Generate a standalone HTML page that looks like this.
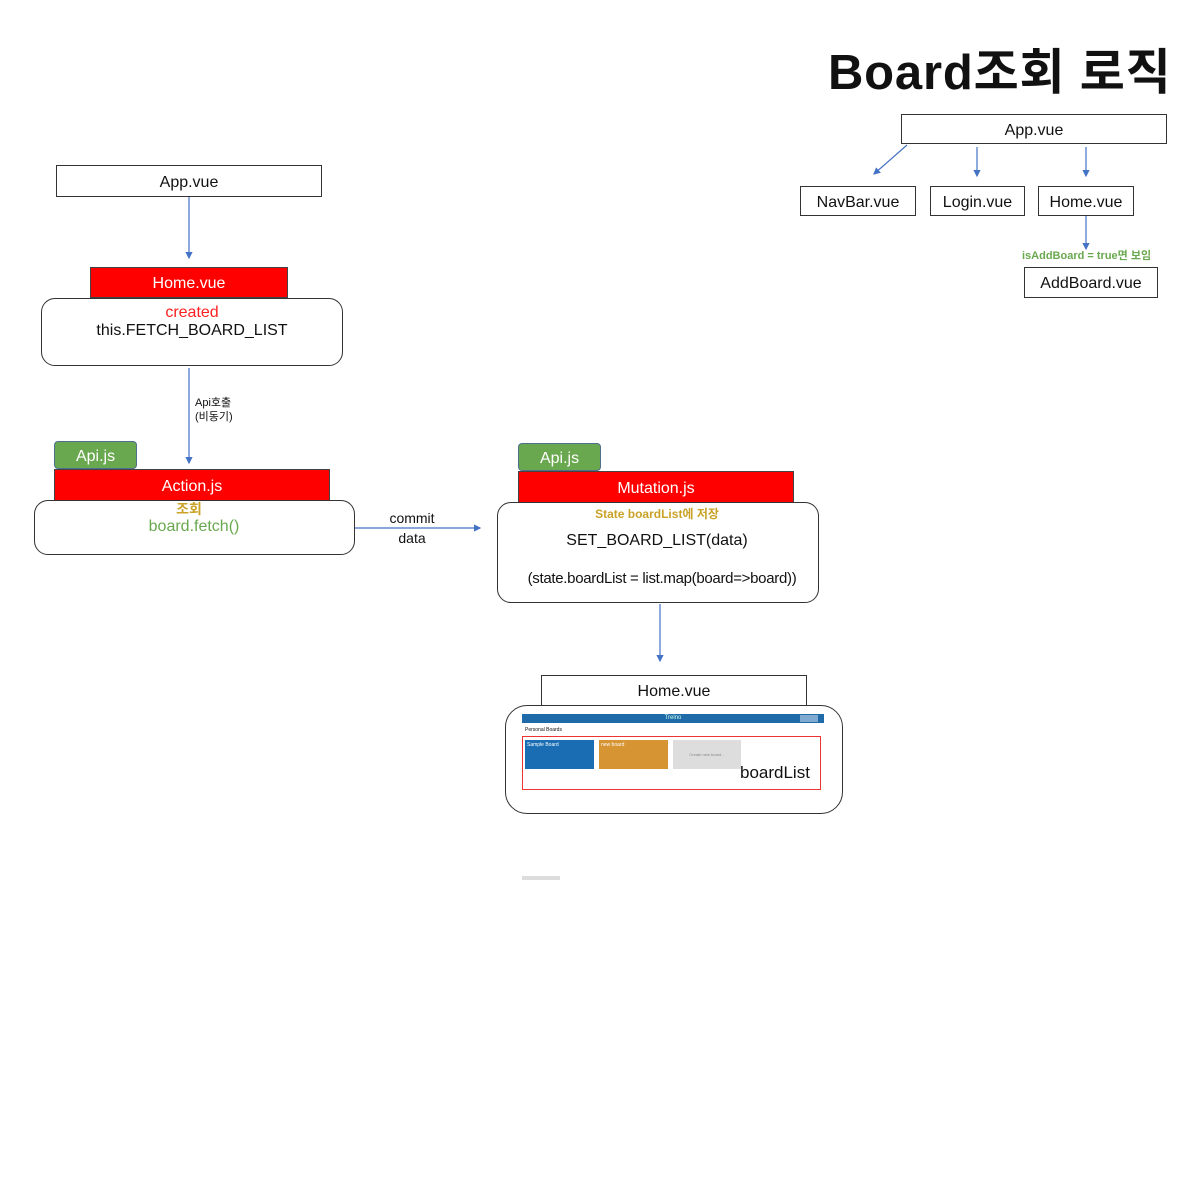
<!DOCTYPE html>
<html><head><meta charset="utf-8"><style>
*{margin:0;padding:0;box-sizing:border-box}
body{width:1200px;height:1204px;background:#fff;position:relative;overflow:hidden;font-family:"Liberation Sans","Noto Sans CJK KR",sans-serif;color:#111}
.a{position:absolute}
.box{position:absolute;border:1px solid #333;background:#fff;display:flex;align-items:center;justify-content:center;font-size:16px;padding-top:3px}
.red{position:absolute;background:#ff0000;border:1px solid #444;color:#fff;display:flex;align-items:center;justify-content:center;font-size:16px;padding-top:3px}
.grn{position:absolute;background:#6aa84f;border:1px solid #4f6f8f;border-radius:4px;color:#fff;display:flex;align-items:center;justify-content:center;font-size:16px;padding-top:3px}
.rnd{position:absolute;border:1px solid #333;border-radius:14px;background:#fff}
.c{position:absolute;text-align:center;white-space:nowrap}
</style></head><body>
<svg class="a" style="left:0;top:0" width="1200" height="1204">
<defs><marker id="m" markerWidth="6" markerHeight="6" refX="5" refY="3" orient="auto"><path d="M0,0L6,3L0,6z" fill="#4472c4"/></marker></defs>
<g stroke="#4472c4" stroke-width="1.2" marker-end="url(#m)">
<line x1="189" y1="197" x2="189" y2="258"/>
<line x1="189" y1="368" x2="189" y2="463"/>
<line x1="355" y1="528" x2="480" y2="528"/>
<line x1="660" y1="604" x2="660" y2="661"/>
<line x1="907" y1="145" x2="874" y2="174"/>
<line x1="977" y1="147" x2="977" y2="176"/>
<line x1="1086" y1="147" x2="1086" y2="176"/>
<line x1="1086" y1="216" x2="1086" y2="249"/>
</g></svg>

<div class="a" style="left:828px;top:33px;font-size:49px;font-weight:bold;white-space:nowrap;letter-spacing:0.8px">Board조회 로직</div>

<div class="box" style="left:901px;top:114px;width:266px;height:30px">App.vue</div>
<div class="box" style="left:800px;top:186px;width:116px;height:30px">NavBar.vue</div>
<div class="box" style="left:930px;top:186px;width:95px;height:30px">Login.vue</div>
<div class="box" style="left:1038px;top:186px;width:96px;height:30px">Home.vue</div>
<div class="a" style="left:1022px;top:247px;font-size:11px;font-weight:bold;color:#6aa84f;white-space:nowrap">isAddBoard = true면 보임</div>
<div class="box" style="left:1024px;top:267px;width:134px;height:31px">AddBoard.vue</div>

<div class="box" style="left:56px;top:165px;width:266px;height:32px">App.vue</div>
<div class="red" style="left:90px;top:267px;width:198px;height:31px">Home.vue</div>
<div class="rnd" style="left:41px;top:298px;width:302px;height:68px"></div>
<div class="c" style="left:41px;top:304px;width:302px;font-size:16px;color:#ff2020">created</div>
<div class="c" style="left:41px;top:322px;width:302px;font-size:16px">this.FETCH_BOARD_LIST</div>
<div class="a" style="left:195px;top:396px;font-size:11px;line-height:14px">Api호출<br>(비동기)</div>

<div class="grn" style="left:54px;top:441px;width:83px;height:28px">Api.js</div>
<div class="red" style="left:54px;top:469px;width:276px;height:32px">Action.js</div>
<div class="rnd" style="left:34px;top:500px;width:321px;height:55px"></div>
<div class="c" style="left:34px;top:499px;width:310px;font-size:14px;color:#c9a227;font-weight:bold">조회</div>
<div class="c" style="left:34px;top:518px;width:320px;font-size:16px;color:#6aa84f">board.fetch()</div>
<div class="c" style="left:370px;top:508px;width:84px;font-size:14px;line-height:20px">commit<br>data</div>

<div class="grn" style="left:518px;top:443px;width:83px;height:28px">Api.js</div>
<div class="red" style="left:518px;top:471px;width:276px;height:32px">Mutation.js</div>
<div class="rnd" style="left:497px;top:502px;width:322px;height:101px"></div>
<div class="c" style="left:497px;top:505px;width:320px;font-size:12px;color:#c9a227;font-weight:bold">State boardList에 저장</div>
<div class="c" style="left:497px;top:532px;width:320px;font-size:16px">SET_BOARD_LIST(data)</div>
<div class="c" style="left:497px;top:570px;width:330px;font-size:15px;letter-spacing:-0.3px">(state.boardList = list.map(board=&gt;board))</div>

<div class="box" style="left:541px;top:675px;width:266px;height:31px">Home.vue</div>
<div class="rnd" style="left:505px;top:705px;width:338px;height:109px;border-radius:22px"></div>
<div class="a" style="left:522px;top:714px;width:302px;height:9px;background:#1f6aa8;color:#cfe;font-size:6px;text-align:center;line-height:9px">Trelno</div>
<div class="a" style="left:800px;top:715px;width:18px;height:7px;background:#7fa9cf"></div>
<div class="a" style="left:525px;top:727px;font-size:5px">Personal Boards</div>
<div class="a" style="left:522px;top:736px;width:299px;height:54px;border:1px solid #e33"></div>
<div class="a" style="left:525px;top:740px;width:69px;height:29px;background:#1a6db3;color:#fff;font-size:5px;padding:2px">Sample Board</div>
<div class="a" style="left:599px;top:740px;width:69px;height:29px;background:#d69432;color:#fff;font-size:5px;padding:2px">new board</div>
<div class="a" style="left:673px;top:740px;width:68px;height:29px;background:#ddd;color:#888;font-size:4px;text-align:center;line-height:29px">Create new board...</div>
<div class="a" style="left:740px;top:763px;font-size:17px">boardList</div>
<div class="a" style="left:522px;top:876px;width:38px;height:4px;background:#ddd"></div>
</body></html>
